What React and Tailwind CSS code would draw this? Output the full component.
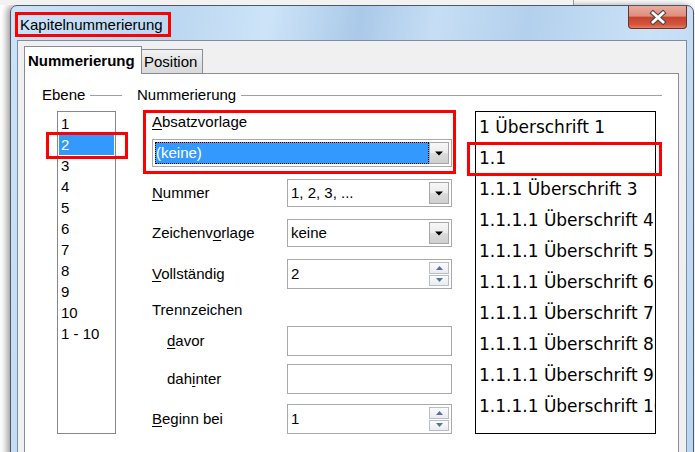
import React from "react";

const levels = ["1", "2", "3", "4", "5", "6", "7", "8", "9", "10", "1 - 10"];

const preview = [
  "1 Überschrift 1",
  "1.1",
  "1.1.1 Überschrift 3",
  "1.1.1.1 Überschrift 4",
  "1.1.1.1 Überschrift 5",
  "1.1.1.1 Überschrift 6",
  "1.1.1.1 Überschrift 7",
  "1.1.1.1 Überschrift 8",
  "1.1.1.1 Überschrift 9",
  "1.1.1.1 Überschrift 10",
];

function DropButton() {
  return (
    <div className="flex w-[20px] items-center justify-center border border-[#a7a7a7] bg-[linear-gradient(#f7f7f7,#ececec_48%,#dcdcdc_52%,#cfcfcf)]">
      <svg width="8" height="5" viewBox="0 0 8 5">
        <path d="M0 0.5h8L4 4.5z" fill="#000" />
      </svg>
    </div>
  );
}

function SpinButtons() {
  const btn =
    "flex flex-1 items-center justify-center border border-[#b8bec8] bg-[linear-gradient(#fbfbfb,#e9ecf0)]";
  return (
    <div className="flex w-[20px] flex-col gap-[1px]">
      <div className={btn}>
        <svg width="7" height="4" viewBox="0 0 7 4">
          <path d="M0 4h7L3.5 0z" fill="#5670a0" />
        </svg>
      </div>
      <div className={btn}>
        <svg width="7" height="4" viewBox="0 0 7 4">
          <path d="M0 0h7L3.5 4z" fill="#5670a0" />
        </svg>
      </div>
    </div>
  );
}

function Combo({ value }) {
  return (
    <div className="flex h-[28px] w-[165px] border border-[#a9a9a9] bg-white p-[2px]">
      <div className="flex flex-1 items-center pl-[1px]">{value}</div>
      <DropButton />
    </div>
  );
}

function Spin({ value }) {
  return (
    <div className="flex h-[30px] w-[165px] border border-[#a9a9a9] bg-white p-[2px]">
      <div className="flex flex-1 items-center pl-[1px]">{value}</div>
      <SpinButtons />
    </div>
  );
}

function Input() {
  return <div className="h-[30px] w-[165px] border border-[#a9a9a9] bg-white" />;
}

function Row({ label, children, className = "" }) {
  return (
    <div className={`flex items-center ${className}`}>
      <div className="w-[135px]">{label}</div>
      {children}
    </div>
  );
}

function CloseButton() {
  return (
    <div className="mr-[6px] flex h-[23px] w-[59px] items-center justify-center rounded-b-[4px] border border-t-0 border-[#6e3028] bg-[linear-gradient(#eaaa9c,#dd8f7f_45%,#c7442f_52%,#d3563d_85%,#e27f62)]">
      <svg width="18" height="15" viewBox="0 0 18 15">
        <path d="M4 3 L14 12 M14 3 L4 12" stroke="#4a4a4a" strokeWidth="5" strokeLinecap="square" />
        <path d="M4 3 L14 12 M14 3 L4 12" stroke="#fff" strokeWidth="2.8" strokeLinecap="square" />
      </svg>
    </div>
  );
}

export default function App() {
  return (
    <div className="h-[452px] w-[695px] overflow-hidden bg-white font-['Liberation_Sans',Arial,sans-serif] text-[15px] leading-[18px] text-black">
      {/* background window edge */}
      <div className="flex h-[5px]">
        <div className="w-[574px] border-r border-[#9a9a9a] bg-[#f2f2f2]" />
      </div>

      {/* dialog window */}
      <div className="ml-[10px] h-[470px] w-[684px] rounded-t-[7px] border border-[#4d5867] bg-[linear-gradient(100deg,#cbe2f7_0%,#bcd7f1_22%,#cde4f8_34%,#aac9e8_46%,#c6def5_56%,#b3d0ec_68%,#cae2f8_84%,#b9d5ef_100%)] shadow-[-3px_0_7px_rgba(0,0,0,0.4)]">
        <div className="flex h-[34px] items-start justify-between">
          <div className="ml-[4px] mt-[6px] flex h-[25px] w-[156px] items-center border-[3px] border-[#ff0000] pl-[2px]">
            Kapitelnummerierung
          </div>
          <CloseButton />
        </div>

        {/* client area */}
        <div className="mx-[6px] h-[430px] border border-[#7d8ea4] bg-[#f0f0f0] pl-[6px] pt-[5px]">
          <div className="relative z-10 -mb-px flex h-[28px] items-end">
            <div className="flex h-[28px] w-[118px] items-center border border-b-0 border-[#898c95] bg-white pl-[3px] font-bold">
              Nummerierung
            </div>
            <div className="flex h-[25px] w-[61px] items-center border border-l-0 border-[#898c95] bg-[linear-gradient(#f3f3f3,#e4e4e4_50%,#d9d9d9)] pl-[2px]">
              Position
            </div>
          </div>

          <div className="h-[390px] w-[655px] border border-[#898c95] bg-white pl-[17px] pt-[12px]">
            <div className="flex">
              {/* Ebene */}
              <div className="w-[80px]">
                <div className="flex items-center">
                  <span>Ebene</span>
                  <div className="ml-[5px] h-px flex-1 bg-[#a0a0a0]" />
                </div>
                <div className="relative ml-[15px] mt-[7px] h-[323px] w-[59px] border border-[#828790] bg-white px-px pt-px">
                  {levels.map((l) => (
                    <div
                      key={l}
                      className={`h-[21px] pl-[2px] leading-[21px] ${l === "2" ? "bg-[#3399ff] text-white" : ""}`}
                    >
                      {l}
                    </div>
                  ))}
                  <div className="absolute -left-[12px] top-[20px] h-[27px] w-[82px] border-[3px] border-[#ff0000]" />
                </div>
              </div>

              {/* Nummerierung */}
              <div className="ml-[15px] w-[525px]">
                <div className="flex items-center">
                  <span>Nummerierung</span>
                  <div className="ml-[5px] h-px flex-1 bg-[#a0a0a0]" />
                </div>

                <div className="flex items-start">
                  <div className="ml-[6px] mt-[6px] w-[313px]">
                    <div className="h-[64px] border-[3px] border-[#ff0000] pl-[6px]">
                      <div>
                        <u className="underline-offset-[2px]">A</u>bsatzvorlage
                      </div>
                      <div className="mt-[8px] flex h-[28px] w-[300px] border border-[#a9a9a9] bg-white p-[2px]">
                        <div className="flex flex-1 items-center border border-dotted border-black bg-[#3399ff] text-white">
                          (keine)
                        </div>
                        <DropButton />
                      </div>
                    </div>

                    <div className="pl-[9px]">
                      <Row
                        className="mt-[5px]"
                        label={
                          <span>
                            <u className="underline-offset-[2px]">N</u>ummer
                          </span>
                        }
                      >
                        <Combo value="1, 2, 3, ..." />
                      </Row>
                      <Row
                        className="mt-[12px]"
                        label={
                          <span>
                            Zeichenv<u className="underline-offset-[2px]">o</u>rlage
                          </span>
                        }
                      >
                        <Combo value="keine" />
                      </Row>
                      <Row
                        className="mt-[12px]"
                        label={
                          <span>
                            <u className="underline-offset-[2px]">V</u>ollständig
                          </span>
                        }
                      >
                        <Spin value="2" />
                      </Row>
                      <div className="mt-[12px]">Trennzeichen</div>
                      <Row
                        className="mt-[7px]"
                        label={
                          <span className="pl-[15px]">
                            <u className="underline-offset-[2px]">d</u>avor
                          </span>
                        }
                      >
                        <Input />
                      </Row>
                      <Row
                        className="mt-[8px]"
                        label={
                          <span className="pl-[15px]">
                            dah<u className="underline-offset-[2px]">i</u>nter
                          </span>
                        }
                      >
                        <Input />
                      </Row>
                      <Row
                        className="mt-[10px]"
                        label={
                          <span>
                            <u className="underline-offset-[2px]">B</u>eginn bei
                          </span>
                        }
                      >
                        <Spin value="1" />
                      </Row>
                    </div>
                  </div>

                  {/* preview */}
                  <div className="relative ml-[19px] mt-[7px] h-[323px] w-[181px] border border-black bg-white">
                    <div className="overflow-hidden">
                      {preview.map((p, i) => (
                        <div
                          key={i}
                          className="h-[31px] whitespace-nowrap pl-[3px] font-['DejaVu_Sans',sans-serif] text-[17px] leading-[31px]"
                        >
                          {p}
                        </div>
                      ))}
                    </div>
                    <div className="absolute -left-[9px] top-[30px] h-[34px] w-[195px] border-[3px] border-[#ff0000]" />
                  </div>
                </div>
              </div>
            </div>
          </div>
        </div>
      </div>
    </div>
  );
}
